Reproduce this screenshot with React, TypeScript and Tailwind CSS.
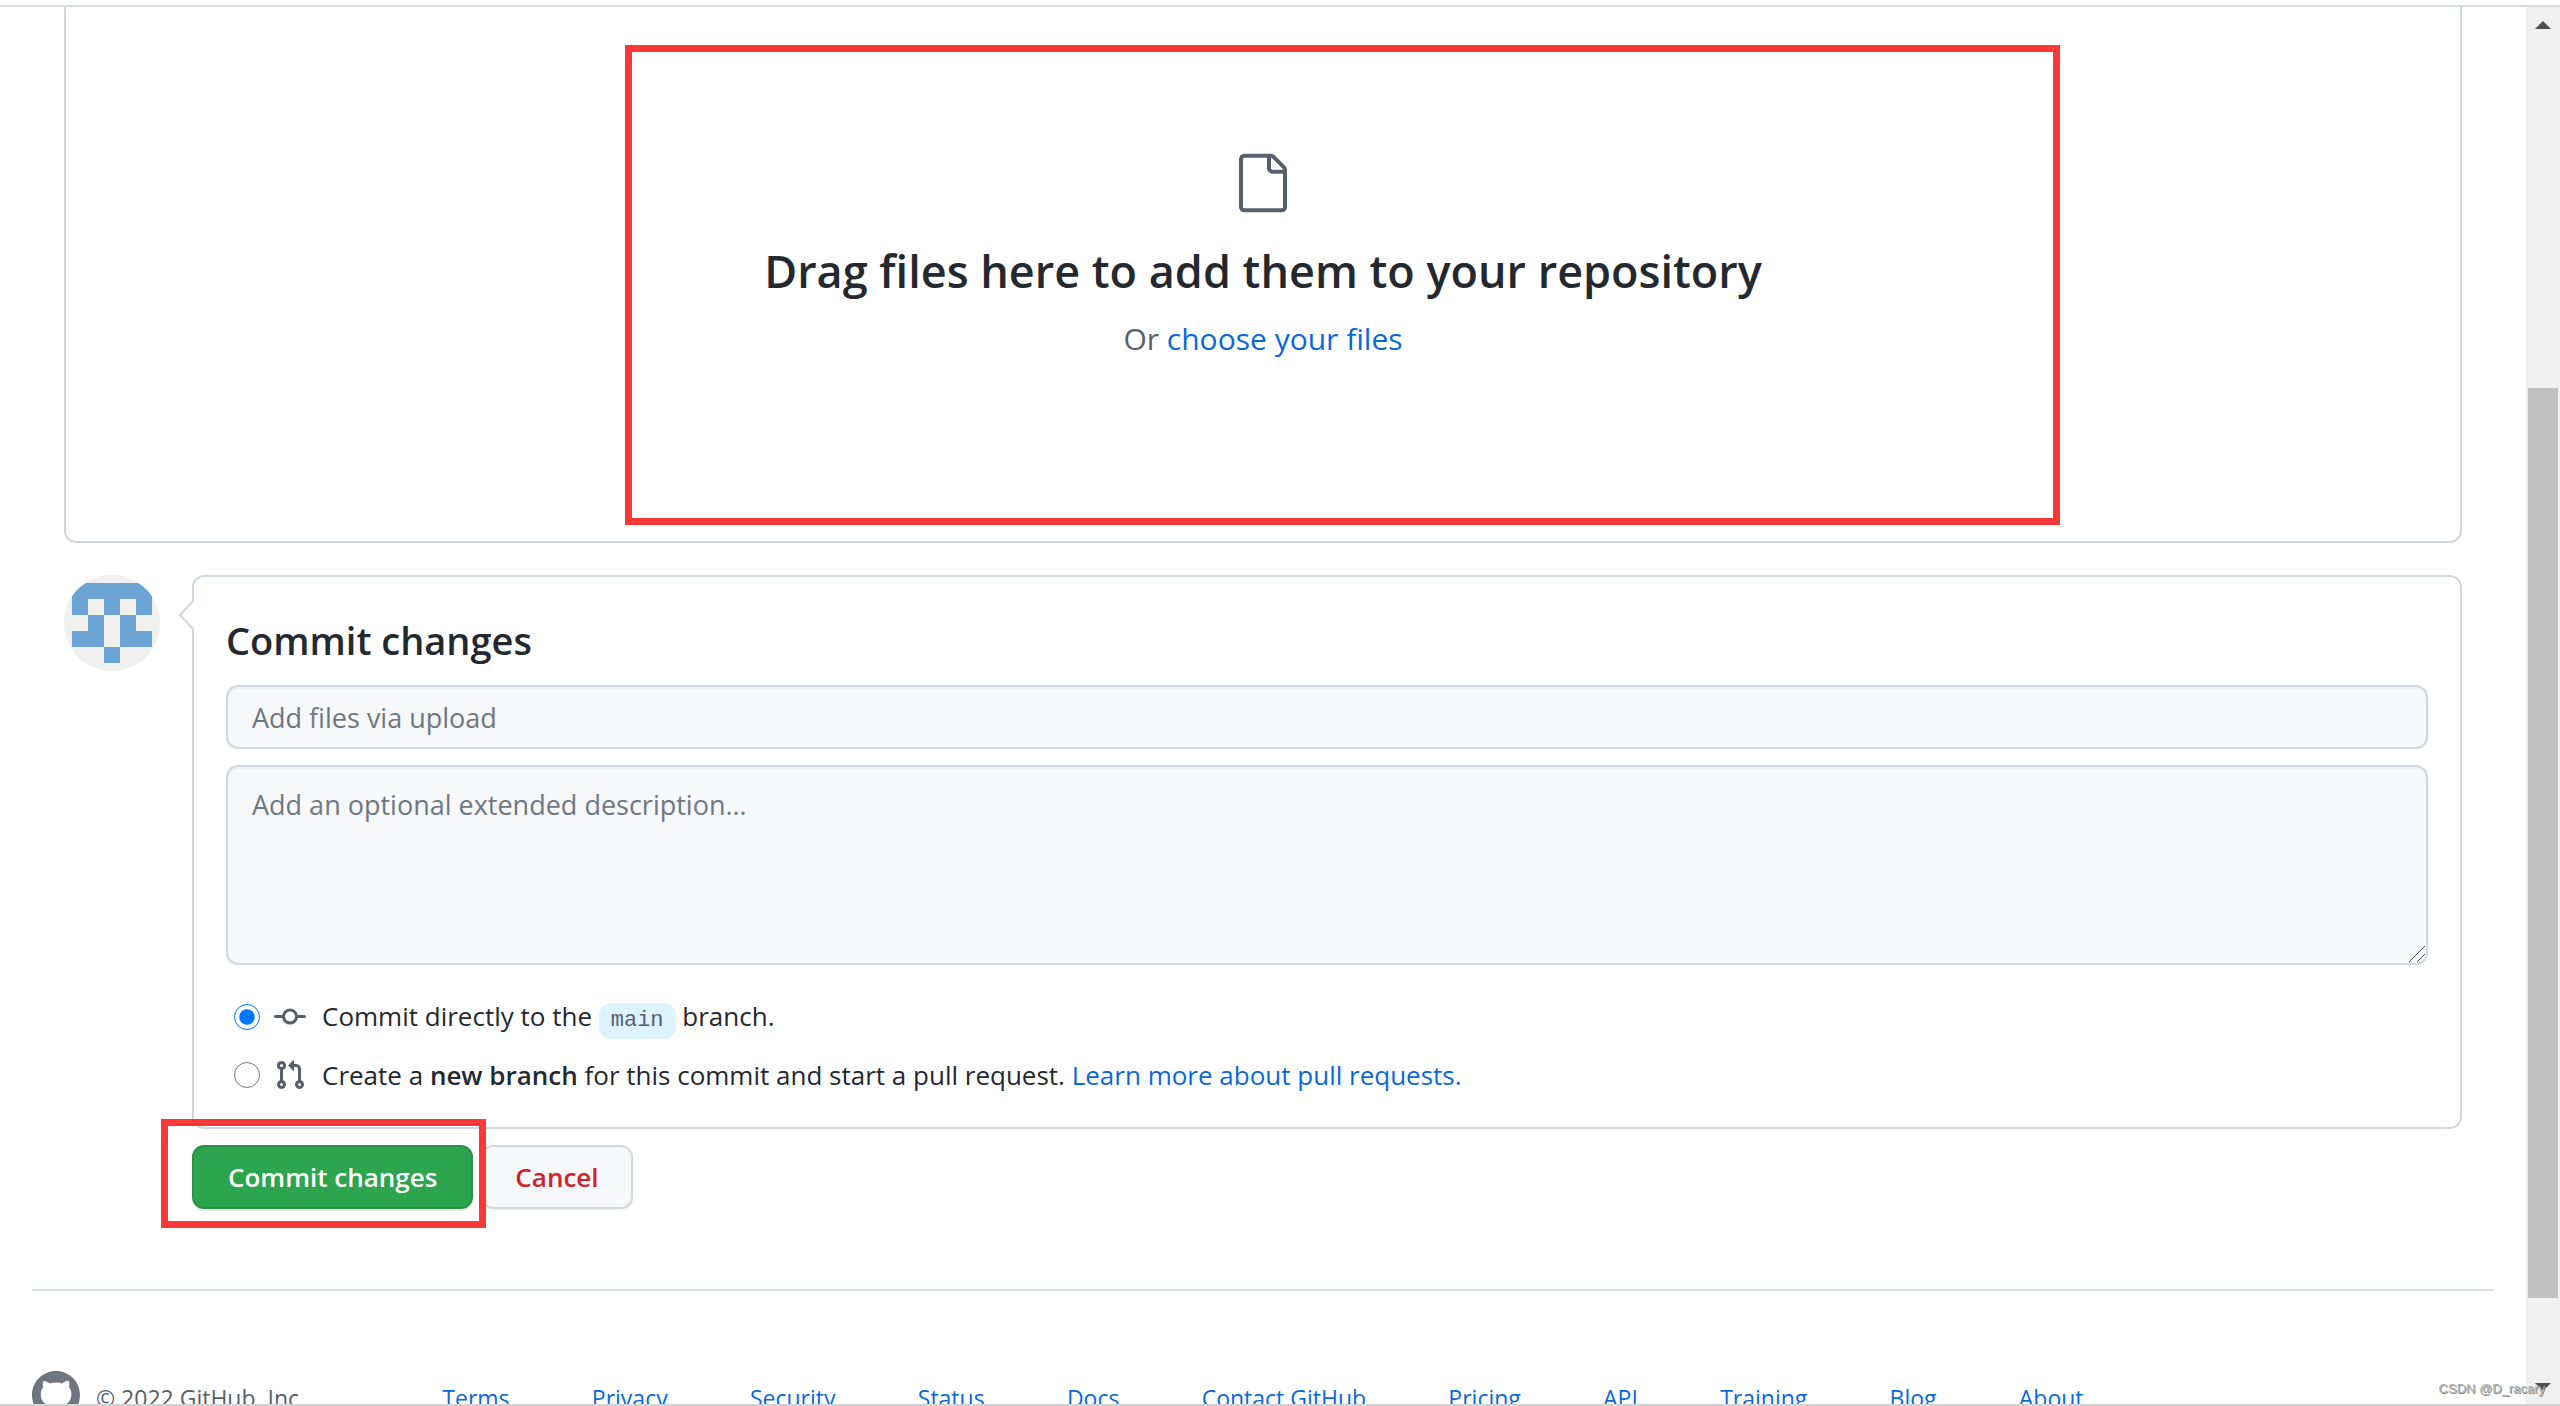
import { useState } from 'react'

const footerLinks = [
  'Terms',
  'Privacy',
  'Security',
  'Status',
  'Docs',
  'Contact GitHub',
  'Pricing',
  'API',
  'Training',
  'Blog',
  'About',
]

// Identicon cells that are filled, as [column, row]
const identiconCells = [
  [0, 0], [1, 0], [2, 0], [3, 0], [4, 0],
  [0, 1], [2, 1], [4, 1],
  [1, 2], [3, 2],
  [0, 3], [1, 3], [3, 3], [4, 3],
  [2, 4],
]

function FileIcon() {
  return (
    <svg viewBox="0 0 24 24" className="size-16 fill-[#57606a]" aria-hidden="true">
      <path
        fillRule="evenodd"
        d="M5 2.5a.5.5 0 00-.5.5v18a.5.5 0 00.5.5h14a.5.5 0 00.5-.5V8.5h-4a2 2 0 01-2-2v-4H5zm10 0v4a.5.5 0 00.5.5h4a.5.5 0 00-.146-.336l-4.018-4.018A.5.5 0 0015 2.5zM3 3a2 2 0 012-2h9.982a2 2 0 011.414.586l4.018 4.018A2 2 0 0121 7.018V21a2 2 0 01-2 2H5a2 2 0 01-2-2V3z"
      />
    </svg>
  )
}

function GitCommitIcon() {
  return (
    <svg viewBox="0 0 16 16" className="size-8 shrink-0 fill-[#57606a]" aria-hidden="true">
      <path
        fillRule="evenodd"
        d="M10.5 7.75a2.5 2.5 0 11-5 0 2.5 2.5 0 015 0zm1.43.75a4.002 4.002 0 01-7.86 0H.75a.75.75 0 110-1.5h3.32a4.001 4.001 0 017.86 0h3.32a.75.75 0 110 1.5h-3.32z"
      />
    </svg>
  )
}

function PullRequestIcon() {
  return (
    <svg viewBox="0 0 16 16" className="size-8 shrink-0 fill-[#57606a]" aria-hidden="true">
      <path
        fillRule="evenodd"
        d="M7.177 3.073L9.573.677A.25.25 0 0110 .854v4.792a.25.25 0 01-.427.177L7.177 3.427a.25.25 0 010-.354zM3.75 2.5a.75.75 0 100 1.5.75.75 0 000-1.5zm-2.25.75a2.25 2.25 0 113 2.122v5.256a2.251 2.251 0 11-1.5 0V5.372A2.25 2.25 0 011.5 3.25zM11 2.5h-1V4h1a1 1 0 011 1v5.628a2.251 2.251 0 101.5 0V5A2.5 2.5 0 0011 2.5zm1 10.25a.75.75 0 111.5 0 .75.75 0 01-1.5 0zM3.75 12a.75.75 0 100 1.5.75.75 0 000-1.5z"
      />
    </svg>
  )
}

function GitHubMark() {
  return (
    <svg viewBox="0 0 16 16" className="size-12 shrink-0 fill-[#6e7781]" aria-hidden="true">
      <path
        fillRule="evenodd"
        d="M8 0C3.58 0 0 3.58 0 8c0 3.54 2.29 6.53 5.47 7.59.4.07.55-.17.55-.38 0-.19-.01-.82-.01-1.49-2.01.37-2.53-.49-2.69-.94-.09-.23-.48-.94-.82-1.13-.28-.15-.68-.52-.01-.53.63-.01 1.08.58 1.23.82.72 1.21 1.87.87 2.33.66.07-.52.28-.87.51-1.07-1.78-.2-3.64-.89-3.64-3.95 0-.87.31-1.59.82-2.15-.08-.2-.36-1.02.08-2.12 0 0 .67-.21 2.2.82.64-.18 1.32-.27 2-.27.68 0 1.36.09 2 .27 1.53-1.04 2.2-.82 2.2-.82.44 1.1.16 1.92.08 2.12.51.56.82 1.27.82 2.15 0 3.07-1.87 3.75-3.65 3.95.29.25.54.73.54 1.48 0 1.07-.01 1.93-.01 2.2 0 .21.15.46.55.38A8.013 8.013 0 0016 8c0-4.42-3.58-8-8-8z"
      />
    </svg>
  )
}

function Avatar() {
  return (
    <svg viewBox="0 0 96 96" className="size-24 shrink-0 rounded-full bg-[#f0f0f0]" aria-hidden="true">
      {identiconCells.map(([col, row]) => (
        <rect
          key={`${col}-${row}`}
          x={8 + col * 16}
          y={8 + row * 16}
          width="16"
          height="16"
          fill="#6ca4d4"
          shapeRendering="crispEdges"
        />
      ))}
    </svg>
  )
}

function UploadArea() {
  return (
    <section className="relative flex flex-col items-center rounded-b-xl border-2 border-t-0 border-[#d0d7de] pt-36 pb-[178px]">
      <FileIcon />
      <h1 className="mt-[26px] text-[45px] leading-[60px] font-semibold">
        Drag files here to add them to your repository
      </h1>
      <p className="mt-[14px] text-[30px] leading-[48px] text-[#57606a]">
        Or{' '}
        <a href="#choose" className="text-[#0969da]">
          choose your files
        </a>
      </p>
      {/* Highlight */}
      <div className="pointer-events-none absolute top-[38px] left-[559px] h-[480px] w-[1435px] border-[7px] border-[#fb3838]" />
    </section>
  )
}

function CommitForm() {
  const [target, setTarget] = useState('direct')

  return (
    <form onSubmit={(e) => e.preventDefault()}>
      <div className="mt-8 flex items-start gap-8">
        <Avatar />
        <div className="relative min-w-0 flex-1 rounded-xl border-2 border-[#d0d7de] p-8">
          {/* Speech bubble caret */}
          <svg
            viewBox="0 0 16 32"
            className="absolute top-[22px] -left-4 h-8 w-4"
            aria-hidden="true"
          >
            <path d="M16 2v28L1 16z" fill="#fff" />
            <path d="M15 2L2 16l13 14" fill="none" stroke="#d0d7de" strokeWidth="2" />
          </svg>

          <h2 className="text-[38px] leading-[62px] font-semibold">Commit changes</h2>
          <input
            type="text"
            aria-label="Commit message"
            placeholder="Add files via upload"
            className="mt-[14px] block h-16 w-full rounded-xl border-2 border-[#d0d7de] bg-[#f6f8fa] px-6 text-[27px] shadow-[inset_0_2px_0_rgba(208,215,222,0.2)] placeholder:text-[#6e7781]"
          />
          <div className="relative mt-4">
            <textarea
              aria-label="Extended description"
              placeholder="Add an optional extended description…"
              className="block h-[200px] w-full resize-none rounded-xl border-2 border-[#d0d7de] bg-[#f6f8fa] px-6 py-4 text-[27px] leading-[44px] shadow-[inset_0_2px_0_rgba(208,215,222,0.2)] placeholder:text-[#6e7781]"
            />
            <svg
              viewBox="0 0 16 16"
              className="absolute right-[3px] bottom-[3px] size-4"
              stroke="#444"
              aria-hidden="true"
            >
              <path d="M0 16L16 0M8 16l8-8" />
            </svg>
          </div>

          <div className="mt-8 flex flex-col gap-[18px] pl-2 text-[26px]">
            <div className="flex h-10 items-center">
              <input
                id="commit-direct"
                type="radio"
                name="target"
                checked={target === 'direct'}
                onChange={() => setTarget('direct')}
                className="size-[26px] accent-[#0075ff]"
              />
              <label htmlFor="commit-direct" className="ml-[14px] flex items-center gap-4 leading-10">
                <GitCommitIcon />
                <span>
                  Commit directly to the{' '}
                  <span className="inline-block rounded-xl bg-[#ddf4ff] px-3 font-['Liberation_Mono',monospace] text-[22px] leading-9 text-[#57606a]">
                    main
                  </span>{' '}
                  branch.
                </span>
              </label>
            </div>
            <div className="flex h-10 items-center">
              <input
                id="commit-branch"
                type="radio"
                name="target"
                checked={target === 'branch'}
                onChange={() => setTarget('branch')}
                className="size-[26px] accent-[#0075ff]"
              />
              <label htmlFor="commit-branch" className="ml-[14px] flex items-center gap-4 leading-10">
                <PullRequestIcon />
                <span>
                  Create a <strong className="font-semibold">new branch</strong> for this commit and
                  start a pull request.{' '}
                  <a href="#learn" className="text-[#0969da]">
                    Learn more about pull requests.
                  </a>
                </span>
              </label>
            </div>
          </div>
        </div>
      </div>

      {/* Actions */}
      <div className="relative mt-4 ml-32 flex gap-2 text-[26px] font-semibold">
        <button
          type="submit"
          className="h-16 rounded-xl border-2 border-[#2a9147] bg-[#2da44e] px-[34px] text-white shadow-[0_2px_0_rgba(27,31,36,0.1)]"
        >
          Commit changes
        </button>
        <button
          type="button"
          className="h-16 rounded-xl border-2 border-[#d5d8da] bg-[#f6f8fa] px-8 text-[#cf222e] shadow-[0_2px_0_rgba(27,31,36,0.04)]"
        >
          Cancel
        </button>
        {/* Highlight */}
        <div className="pointer-events-none absolute -top-[26px] -left-[31px] h-[109px] w-[325px] border-[7px] border-[#fb3838]" />
      </div>
    </form>
  )
}

function Footer() {
  return (
    <footer className="mx-8 mt-20 flex items-end border-t-2 border-[#d8dee4] pt-20 text-[23px] leading-[42px]">
      <div className="flex w-1/6 items-end gap-4 whitespace-nowrap text-[#57606a]">
        <GitHubMark />
        <span>© 2022 GitHub, Inc.</span>
      </div>
      <nav className="flex w-2/3 justify-between whitespace-nowrap">
        {footerLinks.map((link) => (
          <a key={link} href="#footer" className="text-[#0969da]">
            {link}
          </a>
        ))}
      </nav>
    </footer>
  )
}

function Scrollbar() {
  return (
    <div className="flex w-[34px] shrink-0 flex-col items-center bg-[#f0f0f0]" aria-hidden="true">
      <svg viewBox="0 0 16 8" className="mt-[14px] h-2 w-4 fill-[#505050]">
        <path d="M0 8L8 0l8 8z" />
      </svg>
      {/* Track: 359 / 910 / 85 */}
      <div className="flex w-full flex-1 flex-col px-[2px]">
        <div className="grow-[359]" />
        <div className="grow-[910] bg-[#c1c1c1]" />
        <div className="grow-[85]" />
      </div>
      <svg viewBox="0 0 16 8" className="mb-[13px] h-2 w-4 fill-[#505050]">
        <path d="M0 0l8 8 8-8z" />
      </svg>
    </div>
  )
}

export default function App() {
  return (
    <div className="relative flex h-screen flex-col overflow-hidden bg-white pt-[5px] font-['Open_Sans',sans-serif] text-[#24292f]">
      <div className="flex min-h-0 flex-1 border-y-2 border-t-[#dadce0] border-b-[#d3d3d3]">
        <main className="min-w-0 flex-1 overflow-hidden">
          <div className="px-16">
            <UploadArea />
            <CommitForm />
          </div>
          <Footer />
        </main>
        <Scrollbar />
      </div>
      {/* Watermark */}
      <span className="absolute right-[15px] bottom-[7px] font-['Liberation_Sans',sans-serif] text-[13px] leading-5 text-[#b4b4b4] [text-shadow:1px_1px_0_#8a8a8a]">
        CSDN @D_racary
      </span>
    </div>
  )
}
